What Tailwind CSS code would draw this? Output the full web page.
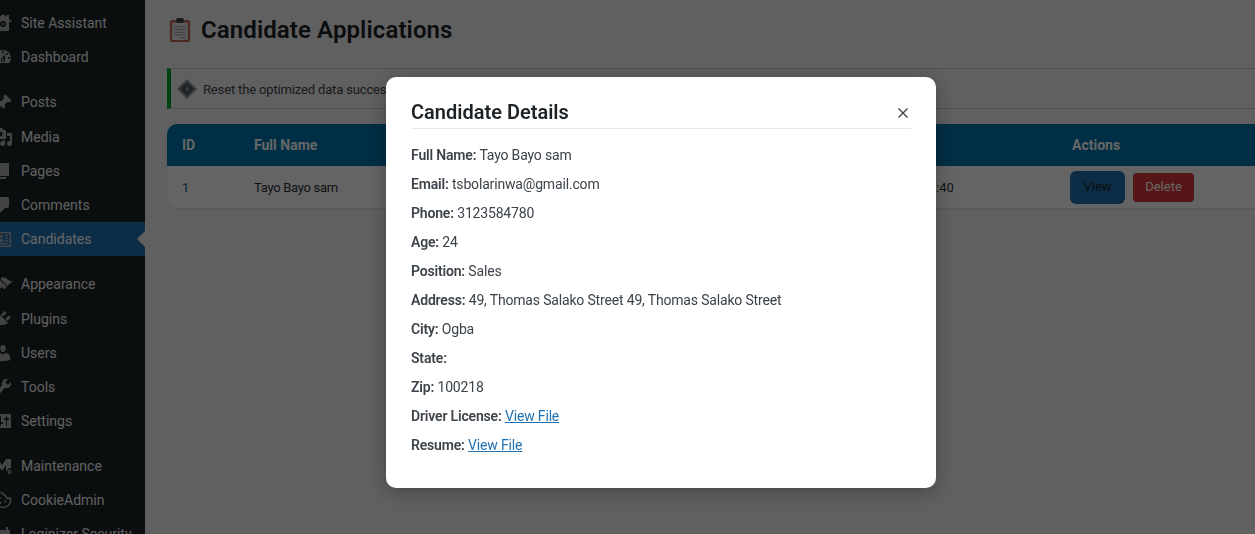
<!DOCTYPE html>
<html lang="en">
<head>
  <meta charset="UTF-8">
  <meta name="viewport" content="width=device-width,initial-scale=1.0">
  <title>Candidate Applications</title>
  <script src="https://cdn.jsdelivr.net/npm/@tailwindcss/browser@4"></script>
</head>
<body class="bg-[#f0f0f1] h-[534px] overflow-hidden font-['Roboto',sans-serif] text-[14px] text-[#3c434a]">
  <div class="flex h-[534px] overflow-hidden">
    <!-- Admin menu -->
    <nav class="relative w-[160px] ml-[-15px] shrink-0 bg-[#1d2327] text-[#f0f0f1] pt-[6px] overflow-hidden">
      <ul class="[&_svg]:w-5 [&_svg]:h-5 [&_svg]:fill-[#a7aaad] [&_svg]:shrink-0">
        <li class="flex items-center gap-2 pl-2 h-[34px]">
          <svg viewBox="0 0 20 20"><path d="M10 1 1 9h3v9h12V9h3l-3-2.7V2h-3v1.600zM10 8a3 3 0 1 1 0 6 3 3 0 0 1 0-6zm0 2a1 1 0 1 0 0 2 1 1 0 0 0 0-2z" fill-rule="evenodd"/></svg>
          <span>Site Assistant</span>
        </li>
        <li class="flex items-center gap-2 pl-2 h-[34px] mb-[11px]">
          <svg viewBox="0 0 20 20"><path d="M3.76 16h12.48c1.1-1.37 1.76-3.11 1.76-5 0-4.42-3.58-8-8-8s-8 3.58-8 8c0 1.89.66 3.63 1.76 5zM10 4c.55 0 1 .45 1 1s-.45 1-1 1-1-.45-1-1 .45-1 1-1zM6 6c.55 0 1 .45 1 1s-.45 1-1 1-1-.45-1-1 .45-1 1-1zm8 0c.55 0 1 .45 1 1s-.45 1-1 1-1-.45-1-1 .45-1 1-1zm-5.37 5.55L12 7v6c0 1.1-.9 2-2 2s-2-.9-2-2c0-.57.24-1.08.63-1.45zM4 10c.55 0 1 .45 1 1s-.45 1-1 1-1-.45-1-1 .45-1 1-1zm12 0c.55 0 1 .45 1 1s-.45 1-1 1-1-.45-1-1 .45-1 1-1zm-5 3c0-.55-.45-1-1-1s-1 .45-1 1 .45 1 1 1 1-.45 1-1z"/></svg>
          <span>Dashboard</span>
        </li>
        <li class="flex items-center gap-2 pl-2 h-[35px]">
          <svg viewBox="0 0 20 20"><path d="M10.44 3.02l1.82-1.82 6.36 6.35-1.83 1.82c-1.05-.68-2.48-.57-3.41.36l-.75.75c-.92.93-1.04 2.35-.35 3.41l-1.83 1.82-2.41-2.41-2.8 2.79c-.42.42-3.38 2.71-3.8 2.29s1.86-3.39 2.28-3.81l2.79-2.79L4.1 9.36l1.83-1.82c1.05.69 2.48.57 3.4-.36l.75-.75c.93-.92 1.05-2.35.36-3.41z"/></svg>
          <span>Posts</span>
        </li>
        <li class="flex items-center gap-2 pl-2 h-[34px]">
          <svg viewBox="0 0 20 20"><path d="M13 11V4c0-.55-.45-1-1-1h-1.67L9 1H5L3.67 3H2c-.55 0-1 .45-1 1v7c0 .55.45 1 1 1h10c.55 0 1-.45 1-1zM7 4.5c1.38 0 2.5 1.12 2.5 2.5S8.38 9.5 7 9.5 4.5 8.38 4.5 7 5.62 4.5 7 4.5zM14 6h5v10.5c0 1.38-1.12 2.5-2.5 2.5S14 17.88 14 16.5s1.12-2.5 2.5-2.5c.17 0 .34.02.5.05V9h-3V6zm-4 8.05V13h2v3.5c0 1.38-1.12 2.5-2.5 2.5S7 17.88 7 16.5 8.12 14 9.5 14c.17 0 .34.02.5.05z"/></svg>
          <span>Media</span>
        </li>
        <li class="flex items-center gap-2 pl-2 h-[34px]">
          <svg viewBox="0 0 20 20"><path d="M6 15V2h10v13H6zm-1 1h8v2H3V5h2v11z"/></svg>
          <span>Pages</span>
        </li>
        <li class="flex items-center gap-2 pl-2 h-[34px]">
          <svg viewBox="0 0 20 20"><path d="M5 2h9c1.1 0 2 .9 2 2v7c0 1.1-.9 2-2 2h-2l-5 5v-5H5c-1.1 0-2-.9-2-2V4c0-1.1.9-2 2-2z"/></svg>
          <span>Comments</span>
        </li>
        <li class="flex items-center gap-2 pl-2 h-[34px] mb-[11px] bg-[#2271b1] text-white">
          <svg viewBox="0 0 20 20" class="[&]:fill-white"><path fill-rule="evenodd" d="M18 18H2V3h16zM3.500 4.500v12h13v-12zM8 5.500a1.800 1.800 0 0 1 1.800 2 1.800 1.800 0 0 1-3.600 0A1.800 1.800 0 0 1 8 5.500zM5 13c0-2 1.300-3 3-3s3 1 3 3zM12 6h3v1.200h-3zm0 2.500h3v1.200h-3zm0 2.500h3v1.200h-3zM5 14h10v1.200H5z"/></svg>
          <span>Candidates</span>
        </li>
        <li class="flex items-center gap-2 pl-2 h-[35px]">
          <svg viewBox="0 0 20 20"><path d="M14.480 11.060L7.410 3.990l1.500-1.500c.5-.56 2.300-.47 3.510.32 1.210.8 1.430 1.280 2.910 2.100 1.180.64 2.450 1.260 4.450.85zm-.71.71L6.700 4.700 4.930 6.470c-.39.39-.39 1.020 0 1.410l1.060 1.060c.39.39.39 1.030 0 1.420-.6.600-1.430 1.110-2.210 1.690-.35.260-.7.530-1.010.840-1.430 1.430-1.860 3-.98 3.890.88.880 2.460.44 3.890-.98.3-.31.570-.66.840-1.010.58-.78 1.090-1.610 1.690-2.210.39-.39 1.020-.39 1.410 0l1.060 1.060c.39.39 1.020.39 1.410 0z"/></svg>
          <span>Appearance</span>
        </li>
        <li class="flex items-center gap-2 pl-2 h-[34px]">
          <svg viewBox="0 0 20 20"><path d="M13.110 4.360L9.870 7.600 8 5.730l3.240-3.240c.35-.34 1.050-.2 1.560.32.52.51.66 1.210.31 1.550zm-8 1.770l.91-1.120 9.010 9.010-1.190.84c-.71.71-2.630 1.160-3.820 1.160H6.140L4.900 17.260c-.59.59-1.540.59-2.120 0-.59-.58-.59-1.530 0-2.120l1.240-1.240v-3.880c0-1.130.4-3.190 1.090-3.890zm7.260 3.970l3.240-3.240c.34-.35 1.040-.21 1.550.31.52.51.66 1.210.31 1.550l-3.240 3.250z"/></svg>
          <span>Plugins</span>
        </li>
        <li class="flex items-center gap-2 pl-2 h-[34px]">
          <svg viewBox="0 0 20 20"><path d="M10 9.250c-2.270 0-2.730-3.440-2.730-3.440C7 4.020 7.820 2 9.970 2c2.160 0 2.980 2.020 2.710 3.810 0 0-.41 3.440-2.680 3.440zm0 2.570L12.720 10c2.390 0 4.520 2.330 4.520 4.530v2.490s-3.650 1.130-7.240 1.130c-3.650 0-7.240-1.130-7.240-1.130v-2.490c0-2.250 1.940-4.480 4.470-4.480z"/></svg>
          <span>Users</span>
        </li>
        <li class="flex items-center gap-2 pl-2 h-[34px]">
          <svg viewBox="0 0 20 20"><path d="M16.680 9.770c-1.340 1.340-3.300 1.670-4.950.99l-5.410 6.520c-.99.99-2.590.99-3.580 0s-.99-2.590 0-3.570l6.520-5.420c-.68-1.650-.35-3.610.99-4.950 1.280-1.280 3.120-1.620 4.720-1.060l-2.890 2.890 2.820 2.820 2.860-2.870c.53 1.580.18 3.390-1.080 4.670zM3.810 16.210c.4.39 1.040.39 1.430 0 .4-.4.4-1.040 0-1.430-.39-.4-1.030-.4-1.430 0-.39.39-.39 1.030 0 1.430z"/></svg>
          <span>Tools</span>
        </li>
        <li class="flex items-center gap-2 pl-2 h-[34px] mb-[11px]">
          <svg viewBox="0 0 20 20"><path d="M18 16V4c0-.55-.45-1-1-1H3c-.55 0-1 .45-1 1v12c0 .55.45 1 1 1h14c.55 0 1-.45 1-1zM8 11h1c.55 0 1 .45 1 1s-.45 1-1 1H8v1.500c0 .28-.22.5-.5.5s-.5-.22-.5-.5V13H6c-.55 0-1-.45-1-1s.45-1 1-1h1V5.500c0-.28.22-.5.5-.5s.5.22.5.5V11zm5-2h-1c-.55 0-1-.45-1-1s.45-1 1-1h1V5.500c0-.28.22-.5.5-.5s.5.22.5.5V7h1c.55 0 1 .45 1 1s-.45 1-1 1h-1v5.500c0 .28-.22.5-.5.5s-.5-.22-.5-.5V9z"/></svg>
          <span>Settings</span>
        </li>
        <li class="flex items-center gap-2 pl-2 h-[34px]">
          <svg viewBox="0 0 20 20"><path fill-rule="evenodd" d="M0 17V3h5l4 6 4-6h5v9.300a3 3 0 0 0-4 2.700h-1V9l-4 6-4-6v8zM16.500 14a2 2 0 1 1 0 4 2 2 0 0 1 0-4zm0 1.200a.8.8 0 1 0 0 1.600.8.8 0 0 0 0-1.600z"/></svg>
          <span>Maintenance</span>
        </li>
        <li class="flex items-center gap-2 pl-2 h-[34px]">
          <svg viewBox="0 0 20 20"><path fill-rule="evenodd" d="M10 2c.3 1.700 1.500 2.700 3 2.800.2 1.600 1.300 2.700 3 2.800.9 0 1.500-.2 2-.4a8 8 0 1 1-8-5.200zM8.800 3.300a6.800 6.800 0 1 0 8.100 6c-2.300.4-4.500-1-5-3.300-1.500-.3-2.700-1.300-3.100-2.700zM7 7a1 1 0 1 1 0 2 1 1 0 0 1 0-2zm5 3.500a1 1 0 1 1 0 2 1 1 0 0 1 0-2zM7.500 12a1 1 0 1 1 0 2 1 1 0 0 1 0-2z"/></svg>
          <span>CookieAdmin</span>
        </li>
        <li class="flex items-center gap-2 pl-2 h-[34px]">
          <svg viewBox="0 0 20 20"><path d="M5 3h2v3h6V3h2v3h2v11H3V6h2z"/></svg>
          <span>Loginizer Security</span>
        </li>
      </ul>
      <!-- current menu arrow -->
      <div class="absolute right-0 top-[231px] border-y-[8px] border-r-[8px] border-y-transparent border-r-[#f0f0f1]"></div>
    </nav>

    <main class="flex-1 min-w-0 pl-[22px] overflow-hidden">
      <div class="flex items-center gap-[10px] mt-[12px] h-[36px]">
        <svg viewBox="0 0 24 28" class="w-[22px] h-[26px] ml-[2px] shrink-0">
          <rect x="1" y="3" width="22" height="24" rx="2" fill="#c1694f"/>
          <rect x="3.500" y="6" width="17" height="19" fill="#e6e7e8"/>
          <rect x="8" y="1" width="8" height="5" rx="1" fill="#3b3f43"/>
          <path d="M6 10h12v1H6zm0 3h12v1H6zm0 3h12v1H6zm0 3h12v1H6zm6 3h6v1h-6z" fill="#8a8f94"/>
        </svg>
        <h1 class="text-[24px] font-semibold tracking-[0.1px] text-[#1d2327] whitespace-nowrap">Candidate Applications</h1>
      </div>

      <div class="flex items-center h-[41px] mt-[20px] bg-[#f0f0f1] border-y border-[#c3c4c7] border-l-4 border-l-[#00a32a]">
        <svg viewBox="0 0 20 20" class="w-5 h-5 ml-[6px] shrink-0"><path d="M10 0l10 10-10 10L0 10z" fill="#8c8f94"/><path d="M10 3l7 7-7 7-7-7z" fill="#50575e"/><path d="M11 6 8.500 10.500h2L9 14.500l3-5h-2z" fill="#c3c4c7"/></svg>
        <span class="ml-[6px] mt-[2px] text-[13px] tracking-[-0.15px] text-[#3c434a] whitespace-nowrap">Reset the optimized data successfully.</span>
      </div>

      <div class="w-[1100px] mt-[15px] rounded-[10px] overflow-hidden bg-white shadow-sm">
        <div class="flex items-center h-[42px] bg-[#0073aa] text-white font-bold">
          <span class="w-[87px] pl-[15px]">ID</span>
          <span class="w-[818px]">Full Name</span>
          <span>Actions</span>
        </div>
        <div class="flex items-center h-[42px] bg-[#f9f9f9] text-[13px] text-[#2c3338]">
          <span class="w-[87px] pl-[15px] mt-px text-[#135e96]">1</span>
          <span class="w-[682px] mt-px tracking-[-0.3px]">Tayo Bayo sam</span>
          <span class="w-[134px] mt-px">:40</span>
          <button class="h-[33px] w-[55px] bg-[#2271b1] rounded-md text-[#1d2327]">View</button>
          <button class="h-[29px] w-[61px] ml-2 bg-[#d63638] rounded text-white">Delete</button>
        </div>
      </div>
    </main>
  </div>

  <!-- Modal -->
  <div class="fixed inset-0 bg-[rgba(0,0,0,0.6)] flex justify-start items-start pl-[386px] pt-[77px]">
    <div class="relative w-[550px] h-[411px] bg-white rounded-[10px] shadow-[0_4px_20px_rgba(0,0,0,0.3)] px-[25px] pt-[20px]">
      <h2 class="text-[20px] leading-[31px] font-semibold text-[#1d2327] border-b border-[#e9e9ea]">Candidate Details</h2>
      <button class="absolute right-[27px] top-[30px] w-3 h-3">
        <svg viewBox="0 0 12 12" class="w-3 h-3"><path d="M1.500 1.500l9 9m0-9l-9 9" stroke="#3c434a" stroke-width="1.400"/></svg>
      </button>
      <div class="mt-[16px] space-y-[8px] tracking-[-0.17px] [&_p]:leading-[21px] [&_b]:font-semibold">
        <p><b>Full Name:</b> Tayo Bayo sam</p>
        <p><b>Email:</b> tsbolarinwa@gmail.com</p>
        <p><b>Phone:</b> 3123584780</p>
        <p><b>Age:</b> 24</p>
        <p><b>Position:</b> Sales</p>
        <p><b>Address:</b> 49, Thomas Salako Street 49, Thomas Salako Street</p>
        <p><b>City:</b> Ogba</p>
        <p><b>State:</b></p>
        <p><b>Zip:</b> 100218</p>
        <p><b>Driver License:</b> <a href="#" class="text-[#2271b1] underline">View File</a></p>
        <p><b>Resume:</b> <a href="#" class="text-[#2271b1] underline">View File</a></p>
      </div>
    </div>
  </div>
</body>
</html>
